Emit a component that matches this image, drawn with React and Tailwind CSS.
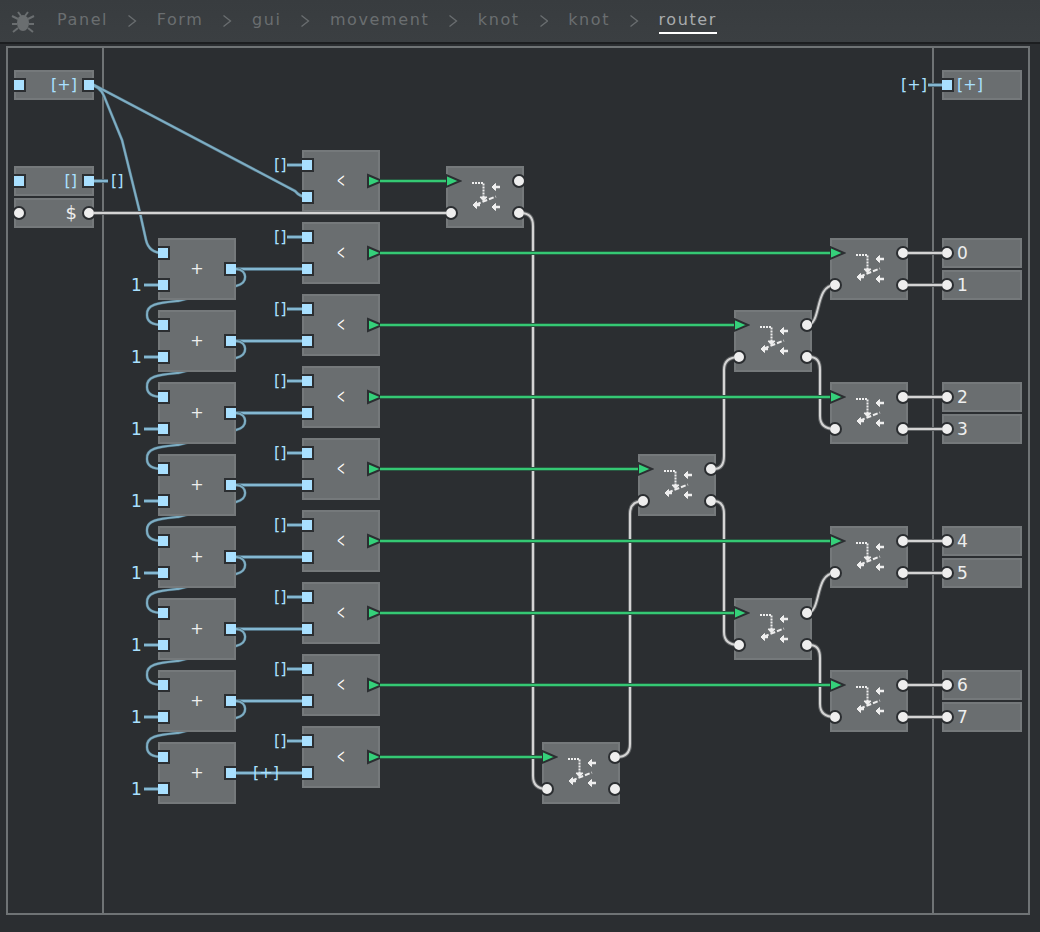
const crumbs = ['Panel', 'Form', 'gui', 'movement', 'knot', 'knot', 'router']

const font = "font-['DejaVu_Sans',sans-serif]"

const rows = [0, 1, 2, 3, 4, 5, 6, 7]
const comparators = [0, 1, 2, 3, 4, 5, 6, 7, 8]

// switch nodes: x, y
const switches = [
  [446, 166], [830, 238], [734, 310], [830, 382], [638, 454],
  [830, 526], [734, 598], [830, 670], [542, 742],
]

const outputs = [
  [238, '0'], [270, '1'], [382, '2'], [414, '3'],
  [526, '4'], [558, '5'], [670, '6'], [702, '7'],
]

const diagonals = [
  'M90 85 L94 85 L295 191 Q300 197 307 197',
  'M90 85 Q100 86 104 96 L122 140 L140 213 L146 240 Q149 253 163 253',
]

const blueWires = [
  'M89 181 H108',
  'M928 85 H947',
  'M231 773 H307',
  ...comparators.map((i) => `M287 ${165 + i * 72} H307`),
  ...rows.slice(0, 7).map((i) => `M231 ${269 + i * 72} H307`),
  ...rows.map((i) => `M144 ${285 + i * 72} H163`),
]

const chainWires = rows.slice(0, 7).map((i) => {
  const y = i * 72
  return `M231 ${269 + y} H237 C247 ${270 + y} 249 ${283 + y} 236 ${286 + y} L178 ${301 + y} C158 ${303 + y} 146 ${304 + y} 147 ${315 + y} C147 ${322 + y} 152 ${325 + y} 163 ${325 + y}`
})

const whiteWires = [
  'M89 213 H451',
  'M518 213 H521 Q533 213 533 226 V776 Q533 789 547 789',
  'M614 757 H617 Q630 757 630 744 V514 Q630 501 643 501',
  'M711 469 H714 Q724 469 724 456 V370 Q724 357 739 357',
  'M711 501 H714 Q724 501 724 514 V632 Q724 645 739 645',
  'M807 325 C822 325 814 285 835 285',
  'M807 357 H810 Q820 357 820 370 V416 Q820 429 835 429',
  'M807 613 C822 613 814 573 835 573',
  'M807 645 H810 Q820 645 820 658 V704 Q820 717 835 717',
  ...[253, 285, 397, 429, 541, 573, 685, 717].map((y) => `M903 ${y} H947`),
]

const greenWires = [
  'M370 181 H450',
  'M370 253 H840',
  'M370 325 H744',
  'M370 397 H840',
  'M370 469 H648',
  'M370 541 H840',
  'M370 613 H744',
  'M370 685 H840',
  'M370 757 H552',
]

function Wires({ paths, glow, core, glowWidth = 4 }) {
  return (
    <g fill="none">
      {paths.map((d, i) => (
        <path key={i} d={d} stroke={glow} strokeWidth={glowWidth} />
      ))}
      {paths.map((d, i) => (
        <path key={i} d={d} stroke={core} strokeWidth="2" />
      ))}
    </g>
  )
}

function BluePort({ x, y }) {
  return (
    <span
      className="absolute h-[14px] w-[14px] border-2 border-[#2b2e31] bg-[#a9e0ff]"
      style={{ left: x - 7, top: y - 7 }}
    />
  )
}

function WhitePort({ x, y }) {
  return (
    <span
      className="absolute h-[14px] w-[14px] rounded-full border-2 border-[#2b2e31] bg-[#eeeeee]"
      style={{ left: x - 7, top: y - 7 }}
    />
  )
}

function GreenPort({ x, y }) {
  return (
    <svg className="absolute" width="18" height="20" style={{ left: x, top: y - 10 }}>
      <path d="M2 4 L16 10 L2 16 Z" fill="#35d07a" stroke="#2b2e31" strokeWidth="2" />
    </svg>
  )
}

function Node({ x, y, w = 78, h = 62, children }) {
  return (
    <div
      className="absolute overflow-hidden bg-[#6a6e70] shadow-[inset_0_0_0_2px_#75797b]"
      style={{ left: x - 8, top: y - 48, width: w, height: h }}
    >
      {children}
    </div>
  )
}

function SwitchIcon() {
  return (
    <svg className="absolute left-0 top-0" width="78" height="62" fill="none" stroke="#eeeeee">
      <path d="M26 17 H37.5 V31" strokeWidth="2" strokeDasharray="2 1" />
      <path d="M30 38.5 L50 30.5" strokeWidth="2" strokeDasharray="5 2" />
      <path d="M48 21 H54 M48 41 H54 M30 39 H34" strokeWidth="2.5" />
      <path d="M46 21 L49.5 17.5 V24.5 Z M46 41 L49.5 37.5 V44.5 Z M27 39 L30.5 35.5 V42.5 Z M34 31 H41 L37.5 35 Z" fill="#eeeeee" strokeWidth="1" />
    </svg>
  )
}

function Label({ x, y, className = 'text-[16px] text-[#a9e0ff]', children }) {
  return (
    <span
      className={`absolute leading-[20px] ${className}`}
      style={{ left: x - 8, top: y - 58 }}
    >
      {children}
    </span>
  )
}

function BugIcon() {
  return (
    <svg width="24" height="24" viewBox="0 0 24 24" fill="none" stroke="#6a6e70" strokeWidth="2">
      <ellipse cx="12" cy="14" rx="6" ry="8" fill="#6a6e70" stroke="none" />
      <path d="M7 3 L10 7 M17 3 L14 7 M1 7 L7 10 M23 7 L17 10 M1 15 H6 M23 15 H18 M2 23 L7 19 M22 23 L17 19" />
    </svg>
  )
}

export default function App() {
  return (
    <div className={`flex h-[932px] w-[1040px] flex-col overflow-hidden bg-[#2b2e31] ${font}`}>
      {/* breadcrumb */}
      <div className="flex h-[44px] shrink-0 items-center gap-[22px] border-b-2 border-[#1c1e20] bg-gradient-to-b from-[#383c3f] to-[#3b3f42] pl-[11px]">
        <BugIcon />
        <div className="flex items-center gap-[20px]">
          {crumbs.map((c, i) => (
            <div key={i} className="flex items-center gap-[20px]">
              {i > 0 && (
                <svg width="8.5" height="12" fill="none" stroke="#6a6e70" strokeWidth="1.3">
                  <path d="M0.5 0.5 L7.5 6 L0.5 11.5" />
                </svg>
              )}
              <span
                className={
                  i === crumbs.length - 1
                    ? 'border-b-2 border-white text-[16px] leading-[24px] tracking-[1.6px] text-[#a8abad]'
                    : 'border-b-2 border-transparent text-[16px] leading-[24px] tracking-[1.6px] text-[#6a6e70]'
                }
              >
                {c}
              </span>
            </div>
          ))}
        </div>
      </div>

      {/* graph frame */}
      <div className="relative ml-[6px] mt-[2px] flex h-[869px] w-[1024px] border-2 border-[#6f7375]">
        <div className="w-[96px] shrink-0 border-r-2 border-[#6f7375]" />
        <div className="flex-1" />
        <div className="w-[96px] shrink-0 border-l-2 border-[#6f7375]" />

        <svg className="absolute left-0 top-0" width="1020" height="865" viewBox="8 48 1020 865">
          <Wires paths={diagonals} glow="#4f6d7d" core="#7eaec4" glowWidth={3} />
          <Wires paths={blueWires} glow="#4f6d7d" core="#84b8d2" />
          <Wires paths={chainWires} glow="#46606e" core="#7eaec4" glowWidth={3} />
          <Wires paths={whiteWires} glow="#5f6264" core="#d4d4d4" />
          <Wires paths={greenWires} glow="#285a42" core="#35c873" />
        </svg>

        {/* input column */}
        <Node x={14} y={70} w={80} h={30}>
          <BluePort x={5} y={15} />
          <BluePort x={75} y={15} />
          <span className="absolute right-[17px] top-[5px] text-[16px] leading-[20px] text-[#a9e0ff]">[+]</span>
        </Node>
        <Node x={14} y={166} w={80} h={30}>
          <BluePort x={5} y={15} />
          <BluePort x={75} y={15} />
          <span className="absolute right-[17px] top-[5px] text-[16px] leading-[20px] text-[#a9e0ff]">[]</span>
        </Node>
        <Node x={14} y={198} w={80} h={30}>
          <WhitePort x={5} y={15} />
          <WhitePort x={75} y={15} />
          <span className="absolute right-[17px] top-[5px] text-[18px] leading-[20px] text-[#eeeeee]">$</span>
        </Node>
        <Label x={111} y={181}>[]</Label>

        {/* adders */}
        {rows.map((i) => (
          <div key={i}>
            <Node x={158} y={238 + i * 72}>
              <BluePort x={5} y={15} />
              <BluePort x={5} y={47} />
              <BluePort x={73} y={31} />
              <span className="absolute inset-0 flex items-center justify-center text-[16px] text-[#eeeeee]">+</span>
            </Node>
            <Label x={131} y={285 + i * 72} className="text-[17px] text-[#a9e0ff]">1</Label>
          </div>
        ))}

        {/* comparators */}
        {comparators.map((i) => (
          <div key={i}>
            <Node x={302} y={150 + i * 72}>
              <BluePort x={5} y={15} />
              <BluePort x={5} y={47} />
              <GreenPort x={64} y={31} />
              <span className="absolute inset-0 flex items-center justify-center font-['Roboto',sans-serif] text-[15px] font-light text-white">
                <span className="scale-y-[1.7]">&lt;</span>
              </span>
            </Node>
            <Label x={274} y={165 + i * 72}>[]</Label>
          </div>
        ))}
        <Label x={253} y={773}>[+]</Label>

        {/* switches */}
        {switches.map(([x, y]) => (
          <Node key={`${x}-${y}`} x={x} y={y}>
            <GreenPort x={-2} y={15} />
            <WhitePort x={5} y={47} />
            <WhitePort x={73} y={15} />
            <WhitePort x={73} y={47} />
            <SwitchIcon />
          </Node>
        ))}

        {/* output column */}
        <Node x={942} y={70} w={80} h={30}>
          <BluePort x={5} y={15} />
          <span className="absolute left-[15px] top-[5px] text-[16px] leading-[20px] text-[#a9e0ff]">[+]</span>
        </Node>
        <Label x={901} y={85}>[+]</Label>
        {outputs.map(([y, text]) => (
          <Node key={text} x={942} y={y} w={80} h={30}>
            <WhitePort x={5} y={15} />
            <span className="absolute left-[15px] top-[5px] text-[17px] leading-[20px] text-[#eeeeee]">{text}</span>
          </Node>
        ))}
      </div>
    </div>
  )
}
